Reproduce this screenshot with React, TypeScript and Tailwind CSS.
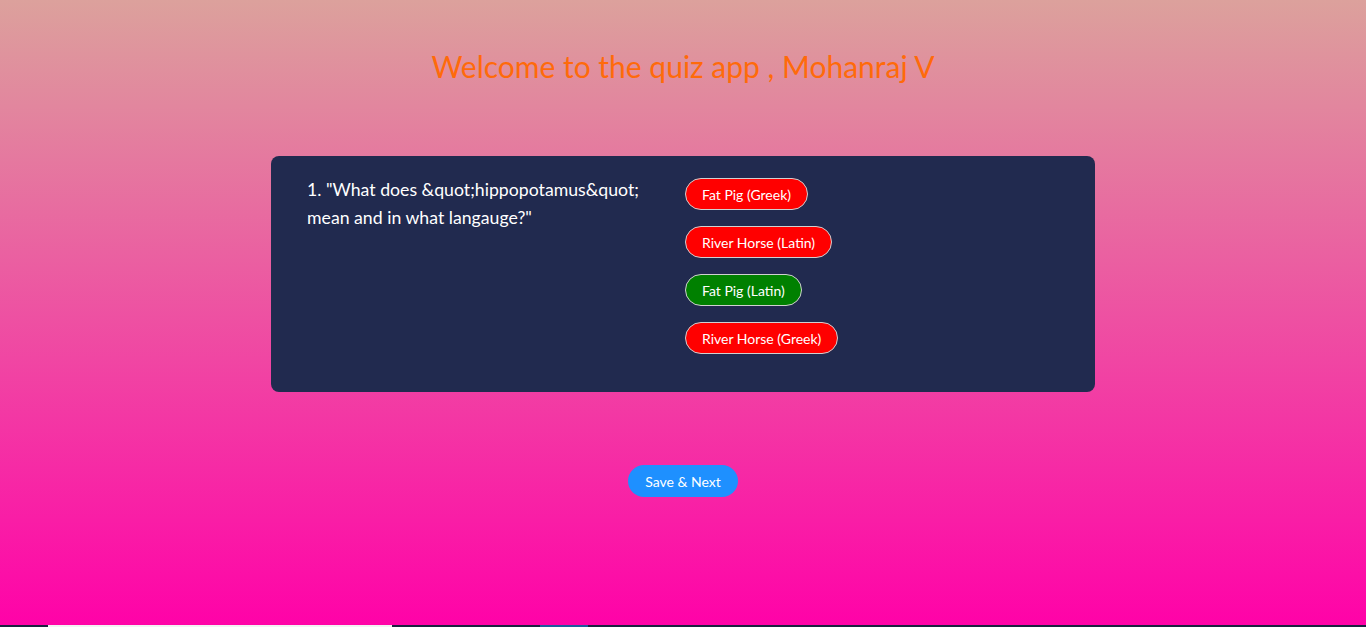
const OPTIONS = [
  { label: 'Fat Pig (Greek)', correct: false },
  { label: 'River Horse (Latin)', correct: false },
  { label: 'Fat Pig (Latin)', correct: true },
  { label: 'River Horse (Greek)', correct: false },
]

export default function App() {
  return (
    <div
      className="flex h-[627px] flex-col bg-linear-to-b/srgb from-[#dca19c] to-[#ff02a8]"
      style={{ fontFamily: "Lato, 'Open Sans', sans-serif" }}
    >
      <div className="flex flex-1 flex-col items-center">
        <h1 className="mt-[46px] text-[30px] font-normal leading-[40px] text-[#ff6a0a]">
          Welcome to the quiz app , Mohanraj V
        </h1>

        {/* Question card */}
        <div className="mt-[70px] flex w-[824px] gap-[36px] rounded-lg bg-[#212a4f] pb-[22px] pl-[36px] pt-[22px]">
          <p className="-mt-[2px] w-[342px] text-[17.7px] leading-[28px] text-white">
            1. "What does &amp;quot;hippopotamus&amp;quot; mean and in what langauge?"
          </p>
          <div className="flex flex-col items-start gap-4 pb-4">
            {OPTIONS.map(o => (
              <button
                key={o.label}
                className={
                  'h-8 rounded-full border border-[#d0d0d0] px-4 text-[14px] text-white ' +
                  (o.correct ? 'bg-[#008000]' : 'bg-[#ff0000]')
                }
              >
                {o.label}
              </button>
            ))}
          </div>
        </div>

        <button className="mt-[73px] h-8 w-[110px] rounded-full bg-[#1e90ff] text-[14px] text-white">
          Save &amp; Next
        </button>
      </div>

      {/* bottom strip */}
      <div className="flex h-[2px] bg-[#1b2240]">
        <div className="ml-[48px] w-[344px] bg-[#f2f2f2]" />
        <div className="ml-[148px] w-[48px] bg-[#1f5a9c]" />
      </div>
    </div>
  )
}
